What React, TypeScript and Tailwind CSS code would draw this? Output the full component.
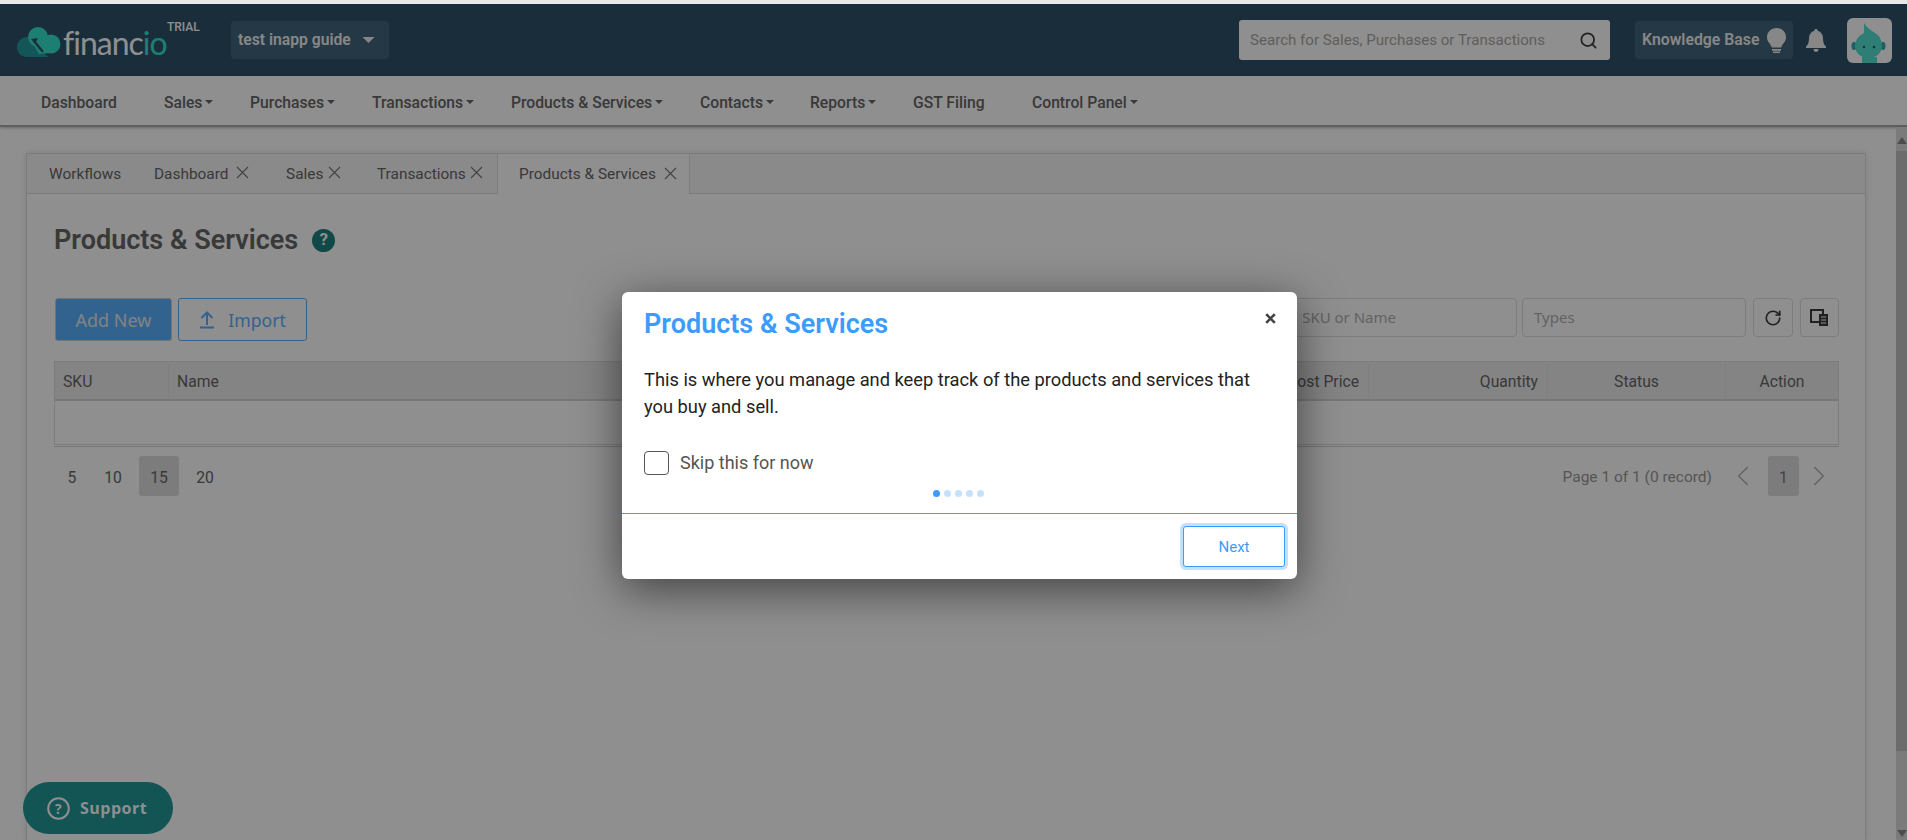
import React from "react";
import { RotateCw, ChevronLeft, ChevronRight, Search } from "lucide-react";

function Caret({ className = "" }: { className?: string }) {
  return (
    <svg width="8" height="4" viewBox="0 0 8 4" className={className}>
      <path d="M0 0h8L4 4z" fill="currentColor" />
    </svg>
  );
}

function TabX({ className = "" }: { className?: string }) {
  return (
    <svg width="13" height="13" viewBox="0 0 13 13" className={className}>
      <path d="M1 1l11 11M12 1L1 12" fill="none" stroke="#777777" strokeWidth="1.100" />
    </svg>
  );
}

function Logo() {
  return (
    <div className="relative flex items-center w-[200px] h-[72px] pl-[17px] shrink-0">
      <svg width="45" height="32" viewBox="0 0 45 32" className="shrink-0 mt-[6px]">
        <path d="M10 30a10 10 0 1 1 5-18.600L31 30z" fill="#2498a0" />
        <circle cx="21" cy="10" r="10" fill="#35e0cc" />
        <circle cx="34" cy="17" r="9.500" fill="#35e0cc" />
        <path d="M13 12h20v14L22 27z" fill="#35e0cc" />
        <path d="M17 14l9 11" fill="none" stroke="#2e5069" strokeWidth="2.200" />
        <path d="M14 12l7-1-3 6z" fill="#2e5069" />
      </svg>
      <div className="ml-[1px] mt-[6px] font-['Lato',sans-serif] text-[32px] leading-none tracking-[-1px] text-white font-normal">
        financ<span className="text-[#34e0d0]">io</span>
      </div>
      <span className="absolute left-[167px] top-[17px] font-['Roboto',sans-serif] text-[12px] font-medium leading-none text-white">TRIAL</span>
    </div>
  );
}

function Avatar() {
  return (
    <div className="w-[45px] h-[45px] rounded-[6px] bg-white overflow-hidden ml-[21px] shrink-0">
      <svg width="45" height="45" viewBox="0 0 45 45">
        <rect x="15" y="39" width="15" height="6" fill="#52e0d2" />
        <ellipse cx="7" cy="28" rx="2.500" ry="4" fill="#38a8b3" />
        <ellipse cx="36" cy="28" rx="2.500" ry="4" fill="#38a8b3" />
        <path d="M17 5c3 5 8 8 11 10 5 3 7 8 7 13 0 7-6 12-13.500 12S8 35 8 28c0-5 3-10 9-13z" fill="#52e0d2" />
        <circle cx="17" cy="29" r="1.300" fill="#2c5a66" />
        <circle cx="27" cy="29" r="1.300" fill="#2c5a66" />
      </svg>
    </div>
  );
}

function Header() {
  return (
    <header className="h-[72px] bg-[#2e5069] flex items-center shrink-0 font-['Roboto',sans-serif]">
      <Logo />
      <div className="ml-[31px] w-[158px] h-[38px] rounded-[4px] bg-[#42647b] flex items-center pl-[7px] text-[15.700px] font-semibold text-[#f0f0f0]">
        <span>test inapp guide</span>
        <Caret className="ml-[11px] w-[13px] h-[6px] text-[#f0f0f0]" />
      </div>
      <div className="ml-auto flex items-center pr-[15px]">
        <div className="w-[371px] h-[40px] rounded-[3px] bg-white flex items-center justify-between pl-[11px] pr-[11px]">
          <span className="pt-[1px] text-[15.100px] text-[#a8a8a8] font-['Roboto',sans-serif]">Search for Sales, Purchases or Transactions</span>
          <Search size={19} strokeWidth={2.200} className="text-[#3e3e3e] mr-[1px]" />
        </div>
        <div className="ml-[25px] w-[158px] h-[38px] rounded-[4px] bg-[#42647b] flex items-center pl-[7px] text-[15.800px] font-semibold text-[#f0f0f0]">
          <span>Knowledge Base</span>
          <svg width="19" height="25" viewBox="0 0 19 25" className="ml-[8px]">
            <path d="M9.500 0C4.300 0 0 4 0 9.200c0 5 3.800 6.300 4.800 10.300h9.400c1-4 4.800-5.300 4.800-10.300C19 4 14.700 0 9.500 0z" fill="#f0f0f0" />
            <rect x="5" y="21" width="9" height="1.800" fill="#f0f0f0" />
            <rect x="6" y="23.500" width="7" height="1.500" fill="#f0f0f0" />
          </svg>
        </div>
        <svg width="20" height="23" viewBox="0 0 20 23" className="ml-[13px]">
          <path d="M10 0c1 0 1.700.7 1.700 1.700 3.300 1 5.300 3.700 5.300 7.300 0 4 .7 6.500 3 8.500v1.500H0v-1.500C2.300 15.500 3 13 3 9c0-3.600 2-6.300 5.300-7.300C8.300.7 9 0 10 0z" fill="#f0f0f0" />
          <path d="M7.500 20h5c0 1.700-1 3-2.500 3s-2.500-1.300-2.500-3z" fill="#f0f0f0" />
        </svg>
        <Avatar />
      </div>
    </header>
  );
}

const navItems: { label: string; caret: boolean; w: string }[] = [
  { label: "Dashboard", caret: false, w: "w-[123px]" },
  { label: "Sales", caret: true, w: "w-[86px]" },
  { label: "Purchases", caret: true, w: "w-[122px]" },
  { label: "Transactions", caret: true, w: "w-[139px]" },
  { label: "Products & Services", caret: true, w: "w-[189px]" },
  { label: "Contacts", caret: true, w: "w-[110px]" },
  { label: "Reports", caret: true, w: "w-[103px]" },
  { label: "GST Filing", caret: false, w: "w-[119px]" },
  { label: "Control Panel", caret: true, w: "w-[140px]" },
];

function Nav() {
  return (
    <nav className="h-[51px] pt-[4px] bg-white border-b-2 border-[#a8a8a8] shadow-[0_1px_3px_rgba(0,0,0,0.25)] flex items-center pl-[41px] shrink-0 text-[15.700px] font-medium text-[#666666] font-['Roboto',sans-serif]">
      {navItems.map((n) => (
        <div key={n.label} className={`${n.w} flex items-center shrink-0`}>
          <span>{n.label}</span>
          {n.caret && <Caret className="ml-[3px] text-[#666666]" />}
        </div>
      ))}
    </nav>
  );
}

const tabs: { label: string; xCls: string; cls: string }[] = [
  { label: "Workflows", xCls: "", cls: "pl-[22px] w-[127px]" },
  { label: "Dashboard", xCls: "ml-[8px]", cls: "w-[132px]" },
  { label: "Sales", xCls: "ml-[5px]", cls: "w-[91px]" },
  { label: "Transactions", xCls: "ml-[4px]", cls: "w-[120px]" },
];

function Tabs() {
  return (
    <div className="h-[40px] bg-[#f6f6f6] border-b border-[#dddddd] flex text-[15.400px] text-[#666666] font-['Roboto',sans-serif]">
      {tabs.map((t) => (
        <div key={t.label} className={`flex items-center shrink-0 ${t.cls}`}>
          <span className="pt-[2px]">{t.label}</span>
          {t.xCls && <TabX className={`${t.xCls} -mt-[2px]`} />}
        </div>
      ))}
      <div className="h-[40px] w-[193px] bg-white border-x border-[#dddddd] flex items-center pl-[21px]">
        <span className="pt-[2px]">Products &amp; Services</span>
        <TabX className="ml-[8px] -mt-[2px]" />
      </div>
    </div>
  );
}

function Toolbar() {
  return (
    <div className="mt-[40px] flex justify-between items-start h-[43px]">
      <div className="flex gap-[6px] pl-[1px]">
        <button className="w-[117px] h-[43px] pt-[1px] rounded-[3px] bg-[#5ab0ff] border border-[#cfcfcf] text-[18px] text-[#e8e8e8]">Add New</button>
        <button className="w-[129px] h-[43px] pt-[1px] rounded-[3px] border border-[#5ab0ff] text-[17.600px] text-[#5ab0ff] flex items-center justify-center gap-[13px]">
          <svg width="16" height="18" viewBox="0 0 16 18">
            <path d="M8 14V2M2.500 7L8 1.500 13.500 7" fill="none" stroke="currentColor" strokeWidth="2" />
            <rect x="1" y="15.500" width="14" height="2" fill="currentColor" />
          </svg>
          <span>Import</span>
        </button>
      </div>
      <div className="flex items-start text-[15px] text-[#b0b0b0]">
        <div className="w-[224px] h-[39px] rounded-[4px] border border-[#dddddd] flex items-center justify-end pr-[120px] whitespace-nowrap">SKU or Name</div>
        <div className="ml-[5px] w-[224px] h-[39px] rounded-[4px] border border-[#dddddd] flex items-center pl-[11px]">Types</div>
        <div className="ml-[7px] w-[40px] h-[39px] rounded-[4px] border border-[#dddddd] flex items-center justify-center text-[#3c3c3c]">
          <RotateCw size={18} strokeWidth={2.200} />
        </div>
        <div className="ml-[7px] w-[39px] h-[39px] rounded-[4px] border border-[#dddddd] flex items-center justify-center text-[#3c3c3c]">
          <svg width="19" height="18" viewBox="0 0 19 18">
            <path d="M1 1h12v12H1z" fill="none" stroke="currentColor" strokeWidth="2" />
            <rect x="9" y="5" width="9" height="12" fill="currentColor" />
            <path d="M11 8h5M11 11h5M11 14h5" stroke="#ffffff" strokeWidth="1" />
          </svg>
        </div>
      </div>
    </div>
  );
}

function Table() {
  return (
    <div className="mt-[20px] h-[86px] border-b border-[#cfcfcf] font-['Roboto',sans-serif] text-[15.700px] text-[#666666]">
      <div className="h-[84px] border border-[#dddddd]">
        <div className="h-[39px] pt-[2px] bg-[#ececec] border-b-2 border-[#d4d4d4] flex items-center">
          <div className="w-[114px] h-full flex items-center pl-[8px] border-r border-[#e2e2e2]">SKU</div>
          <div className="flex-1 h-full flex items-center pl-[8px] border-r border-[#e2e2e2]">Name</div>
          <div className="w-[120px] h-full flex items-center justify-end pr-[9px] border-r border-[#e2e2e2]">Cost Price</div>
          <div className="w-[179px] h-full flex items-center justify-end pr-[9px] border-r border-[#e2e2e2]">Quantity</div>
          <div className="w-[178px] h-full flex items-center justify-center border-r border-[#e2e2e2]">Status</div>
          <div className="w-[112px] h-full flex items-center justify-center">Action</div>
        </div>
      </div>
    </div>
  );
}

function Pager() {
  const cell = "h-[40px] flex items-center justify-center pt-[3px]";
  return (
    <div className="mt-[9px] flex items-center justify-between h-[40px] font-['Roboto',sans-serif] text-[15.700px] text-[#666666]">
      <div className="flex items-center pl-[1px]">
        <div className={`${cell} w-[34px] mr-[4px]`}>5</div>
        <div className={`${cell} w-[40px] mr-[6px]`}>10</div>
        <div className={`${cell} w-[40px] mr-[6px] rounded-[3px] bg-[#dddddd]`}>15</div>
        <div className={`${cell} w-[40px]`}>20</div>
      </div>
      <div className="flex items-center text-[#999999]">
        <span className="pt-[3px] text-[15.500px]">Page 1 of 1 (0 record)</span>
        <ChevronLeft size={34} strokeWidth={1} className="ml-[14px] text-[#b0b0b0]" />
        <div className="ml-[8px] w-[31px] h-[40px] pt-[3px] rounded-[3px] bg-[#dddddd] flex items-center justify-center text-[#777777]">1</div>
        <ChevronRight size={34} strokeWidth={1} className="ml-[3px] mr-[3px] text-[#b0b0b0]" />
      </div>
    </div>
  );
}

function Modal() {
  return (
    <div className="absolute left-[622px] top-[292px] w-[675px] h-[287px] bg-white rounded-[6px] shadow-[0_10px_45px_rgba(0,0,0,0.55)] flex flex-col font-['Roboto',sans-serif]">
      <div className="relative px-[22px] pt-[14px] flex-1">
        <h2 className="text-[27px] leading-[36px] font-semibold text-[#3b9cfb]">Products &amp; Services</h2>
        <svg width="11" height="11" viewBox="0 0 11 11" className="absolute right-[21px] top-[21px]">
          <path d="M1.200 1.200l8.600 8.600M9.800 1.200l-8.600 8.600" fill="none" stroke="#444444" strokeWidth="2.600" />
        </svg>
        <p className="mt-[24px] text-[18.300px] leading-[27px] text-[#222222]">
          This is where you manage and keep track of the products and services that you buy and sell.
        </p>
        <label className="mt-[29px] flex items-center">
          <span className="w-[25px] h-[24px] rounded-[4px] border border-[#555555] bg-white" />
          <span className="ml-[11px] text-[18px] text-[#555555]">Skip this for now</span>
        </label>
        <div className="mt-[14px] flex justify-center gap-[4px] pr-[3px]">
          <span className="w-[7px] h-[7px] rounded-full bg-[#3b9cfb]" />
          <span className="w-[7px] h-[7px] rounded-full bg-[#c4e0fd]" />
          <span className="w-[7px] h-[7px] rounded-full bg-[#c4e0fd]" />
          <span className="w-[7px] h-[7px] rounded-full bg-[#c4e0fd]" />
          <span className="w-[7px] h-[7px] rounded-full bg-[#c4e0fd]" />
        </div>
      </div>
      <div className="h-[66px] border-t border-[#4a9ff0] flex items-start justify-end pr-[12px] pt-[12px]">
        <button className="w-[102px] h-[41px] pt-[2px] rounded-[3px] border border-[#3b9cfb] ring-[3px] ring-[#c4e0fd] bg-white text-[15px] text-[#3b9cfb]">Next</button>
      </div>
    </div>
  );
}

export default function App() {
  return (
    <div className="relative w-full h-[840px] overflow-hidden bg-white flex flex-col">
      <div className="h-[4px] bg-[#e8e8e8] shrink-0" />
      <Header />
      <Nav />
      <div className="flex-1 flex min-h-0">
        <main className="flex-1 pt-[26px] pl-[26px] pr-[30px] min-w-0">
          <div className="h-full border-x border-t border-[#dddddd] shadow-[0_0_6px_rgba(0,0,0,0.12)] bg-white">
            <Tabs />
            <div className="pl-[27px] pr-[26px]">
              <div className="mt-[28px] h-[36px] flex items-center font-['Roboto',sans-serif]">
                <h1 className="text-[27px] font-semibold text-[#666666]">Products &amp; Services</h1>
                <span className="ml-[14px] w-[23px] h-[23px] rounded-full bg-[#1f8080] flex items-center justify-center text-[17px] font-bold text-white">?</span>
              </div>
              <Toolbar />
              <Table />
              <Pager />
            </div>
          </div>
        </main>
        <div className="w-[11px] bg-[#dcdcdc] shrink-0 flex flex-col items-center">
          <svg width="10" height="9" viewBox="0 0 10 9" className="mt-[9px] text-[#8a8a8a]">
            <path d="M5 1l5 7H0z" fill="currentColor" />
          </svg>
          <div className="mt-[6px] w-full h-[600px] bg-[#c0c0c0]" />
          <svg width="10" height="9" viewBox="0 0 10 9" className="mt-auto mb-[2px] text-[#8a8a8a]">
            <path d="M5 8L0 1h10z" fill="currentColor" />
          </svg>
        </div>
      </div>

      <div className="absolute inset-x-0 top-[4px] bottom-0 bg-black/[0.44]" />
      <Modal />
      <button className="absolute left-[23px] top-[782px] w-[150px] h-[52px] rounded-full bg-[#135555] flex items-center pl-[24px] font-['Open_Sans',sans-serif] text-[16px] font-bold tracking-[0.5px] text-[#8f8f8f]">
        <svg width="23" height="23" viewBox="0 0 23 23" className="mr-[10px]">
          <circle cx="11.500" cy="11.500" r="10.300" fill="none" stroke="#8f8f8f" strokeWidth="2" />
          <text x="11.500" y="16.500" textAnchor="middle" fontSize="14" fontWeight="700" fill="#8f8f8f" fontFamily="'Open Sans', sans-serif">?</text>
        </svg>
        Support
      </button>
    </div>
  );
}
